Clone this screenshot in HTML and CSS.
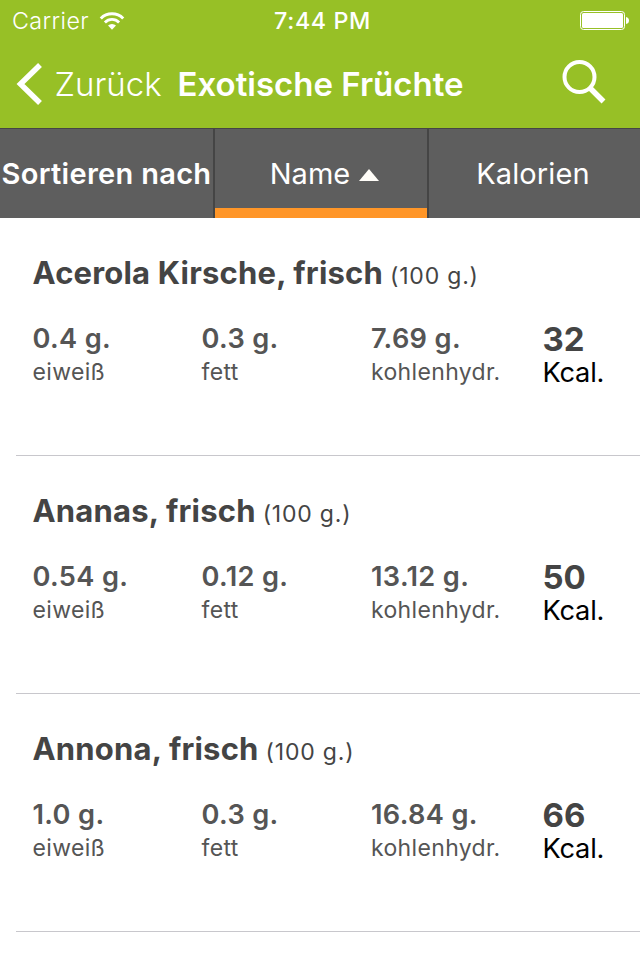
FILE: index.html
```html
<!DOCTYPE html>
<html lang="de">
<head>
<meta charset="utf-8">
<title>Exotische Früchte</title>
<link rel="stylesheet" href="styles.css">
</head>
<body>
<header class="top">
  <div class="status">
    <div class="carrier"><span class="carrier-name">Carrier</span>
      <svg class="wifi" width="26" height="19" viewBox="0 0 26 19"><path d="M1.8 6.5a15.8 15.8 0 0 1 22.4 0" fill="none" stroke="#fff" stroke-width="3"/><path d="M5.9 10.4a10 10 0 0 1 14.2 0" fill="none" stroke="#fff" stroke-width="2.8"/><path d="M9 13.6a5.8 5.8 0 0 1 8 0L13 17.8z" fill="#fff"/></svg>
    </div>
    <span class="time">7:44 PM</span>
    <svg class="battery" width="50" height="20" viewBox="0 0 50 20"><rect x=".5" y=".5" width="44" height="18" rx="3" fill="none" stroke="#fff"/><rect x="2" y="2" width="41" height="15" rx="1.5" fill="#fff"/><path d="M46 6q3 .5 3 3.5t-3 3.5z" fill="#fff"/></svg>
  </div>
  <nav class="nav">
    <a class="back"><svg width="26" height="42" viewBox="0 0 26 42"><path d="M24 2L4.500 21l19.500 19" fill="none" stroke="#fff" stroke-width="5.500"/></svg><span class="back-label">Zurück</span></a>
    <h1 class="title">Exotische Früchte</h1>
    <svg class="search" width="44" height="46" viewBox="0 0 44 46"><circle cx="17.500" cy="18" r="15" fill="none" stroke="#fff" stroke-width="4"/><path d="M27.500 28.500L41.500 42.500" stroke="#fff" stroke-width="5.500"/></svg>
  </nav>
</header>
<div class="sort">
  <div class="tab tab-label"><span>Sortieren nach</span></div>
  <div class="tab tab-active"><span>Name</span><svg class="arrow" width="20" height="12" viewBox="0 0 20 12"><path d="M10 0l10 12H0z" fill="#fffdf8"/></svg></div>
  <div class="tab tab-last"><span>Kalorien</span></div>
</div>
<main class="list">
  <article class="item">
    <h2 class="name"><span class="food">Acerola Kirsche, frisch</span><span class="portion">(100 g.)</span></h2>
    <div class="facts">
      <div class="fact"><b>0.4 g.</b><span>eiweiß</span></div>
      <div class="fact"><b>0.3 g.</b><span>fett</span></div>
      <div class="fact"><b>7.69 g.</b><span>kohlenhydr.</span></div>
      <div class="kcal"><b>32</b><span>Kcal.</span></div>
    </div>
  </article>
  <article class="item">
    <h2 class="name"><span class="food">Ananas, frisch</span><span class="portion">(100 g.)</span></h2>
    <div class="facts">
      <div class="fact"><b>0.54 g.</b><span>eiweiß</span></div>
      <div class="fact"><b>0.12 g.</b><span>fett</span></div>
      <div class="fact"><b>13.12 g.</b><span>kohlenhydr.</span></div>
      <div class="kcal"><b>50</b><span>Kcal.</span></div>
    </div>
  </article>
  <article class="item">
    <h2 class="name"><span class="food">Annona, frisch</span><span class="portion">(100 g.)</span></h2>
    <div class="facts">
      <div class="fact"><b>1.0 g.</b><span>eiweiß</span></div>
      <div class="fact"><b>0.3 g.</b><span>fett</span></div>
      <div class="fact"><b>16.84 g.</b><span>kohlenhydr.</span></div>
      <div class="kcal"><b>66</b><span>Kcal.</span></div>
    </div>
  </article>
</main>
</body>
</html>
```
FILE: styles.css
```css
* { box-sizing: border-box; }
body {
  margin: 0;
  background: #fff;
  font-family: Inter, "Liberation Sans", sans-serif;
  color: #444;
}
svg { display: block; flex: none; }
.top { height: 128px; background: #97c026; color: #fff; }
.status {
  display: grid;
  grid-template-columns: 1fr auto 1fr;
  align-items: center;
  height: 42px;
  padding: 0 10px 0 12px;
  font-size: 23.3px;
  line-height: 42px;
}
.carrier { display: flex; align-items: center; gap: 10px; }
.carrier-name { font-weight: 300; letter-spacing: 0.4px; }
.time { padding-left: 3px; font-weight: 500; letter-spacing: 0.6px; }
.battery { justify-self: end; }
.nav { display: flex; align-items: center; height: 84px; line-height: 84px; padding: 0 34px 0 16px; white-space: nowrap; }
.back { display: flex; align-items: center; gap: 12.5px; width: 161.5px; font-size: 33px; }
.back-label { font-weight: 300; }
.title { margin: 0; font-size: 33px; font-weight: 600; }
.search { margin: -4px 0 0 auto; }
.sort {
  display: grid;
  grid-template-columns: 213px 214px 213px;
  height: 90px;
  background: #5e5e5e;
  border-top: 1px solid #454545;
  color: #fff;
  font-size: 29px;
}
.tab { display: flex; align-items: center; justify-content: center; gap: 9px; white-space: nowrap; }
.tab + .tab { border-left: 2px solid #454545; }
.tab-label { font-weight: 600; letter-spacing: 0.3px; }
.tab-active { padding-left: 7px; background: linear-gradient(#ff9628, #ff9628) bottom / 100% 10px no-repeat; }
.tab-last { padding-right: 3px; letter-spacing: 0.1px; }
.arrow { margin-top: 3px; }
.item { height: 238px; margin-left: 16px; padding: 35px 0 0 16.5px; border-bottom: 1px solid #c8c7cc; }
.name { display: flex; align-items: baseline; gap: 7px; margin: 0; height: 40px; line-height: 40px; font-size: 31px; font-weight: 700; white-space: nowrap; }
.food { letter-spacing: 0.2px; }
.portion { font-size: 23px; font-weight: 400; letter-spacing: 0.8px; }
.facts { display: grid; grid-template-columns: 169px 169.5px 171.5px auto; margin-top: 28px; color: #555; }
.facts b, .facts span { display: block; height: 34px; line-height: 34px; white-space: nowrap; }
.fact b { font-size: 27.2px; line-height: 36px; font-weight: 600; letter-spacing: 0.35px; }
.fact span { font-size: 23px; letter-spacing: 0.35px; }
.kcal { padding-top: 1px; }
.kcal b { font-size: 33px; font-weight: 700; color: #444; }
.kcal span { font-size: 27.2px; letter-spacing: -0.2px; color: #000; }
```
